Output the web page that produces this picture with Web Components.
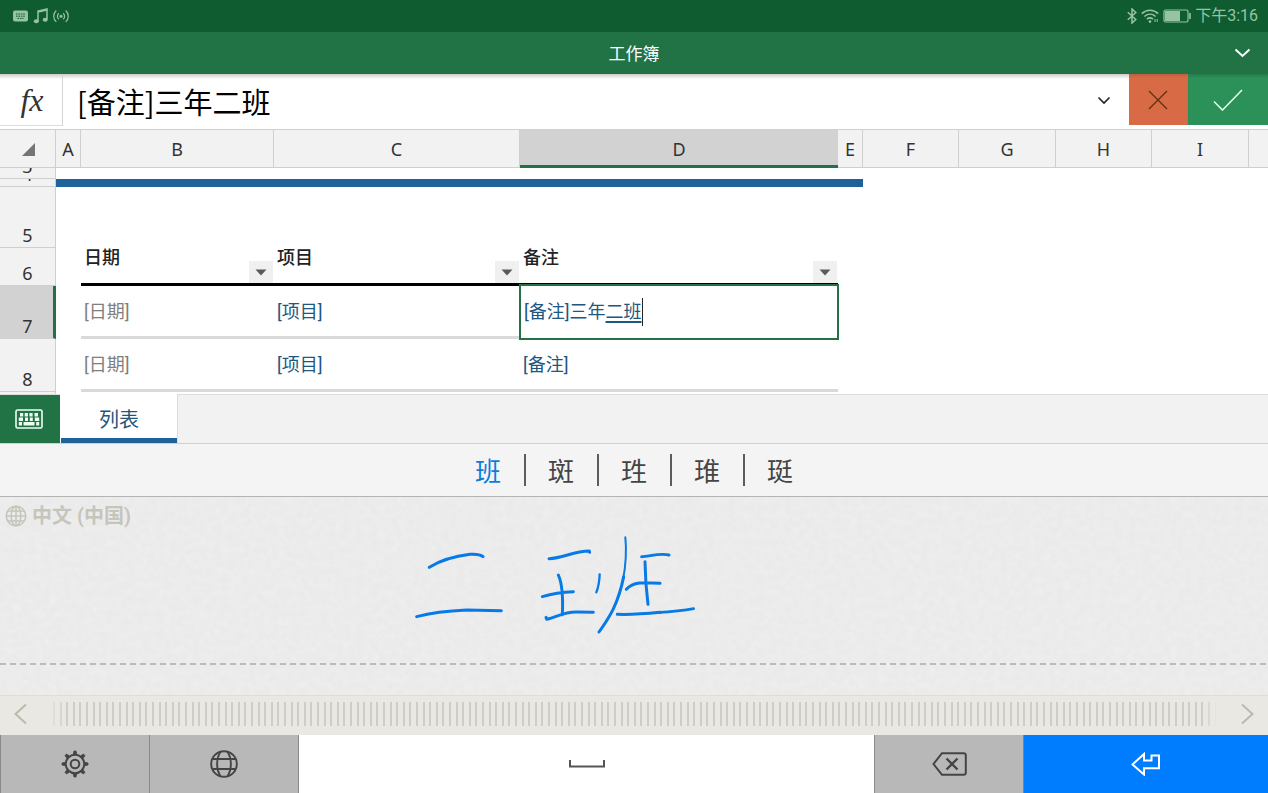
<!DOCTYPE html>
<html lang="zh-CN">
<head>
<meta charset="utf-8">
<title>工作簿</title>
<style>
  html, body { margin: 0; height: 100%; }
  body { background: #fff; font-family: "Noto Sans", "Noto Sans CJK SC", sans-serif; color: #222; }
</style>
</head>
<body>
<workbook-app></workbook-app>
<script>
const define = (name, css, html) => {
  const tpl = document.createElement('template');
  tpl.innerHTML = `<style>*{box-sizing:border-box}:host{display:block;box-sizing:border-box}svg{display:block;flex:none}button{font:inherit;color:inherit;border:0;margin:0;padding:0;background:none}${css}</style>${html}`;
  customElements.define(name, class extends HTMLElement {
    constructor() {
      super();
      this.attachShadow({ mode: 'open' }).append(tpl.content.cloneNode(true));
    }
  });
};

define('status-bar', `
  :host { display: flex; justify-content: space-between; align-items: center; height: 32px; padding: 0 10px 0 13px;
    background: #0f5c30; color: #96c3a4; font: 16px/32px Roboto, "Noto Sans CJK SC", sans-serif; }
  div { display: flex; align-items: center; gap: 5px; }
  .right { gap: 4px; }
`, `
  <div>
    <svg width="15" height="12" viewBox="0 0 15 12"><rect width="15" height="11" y=".5" rx="2" fill="currentColor"/><path d="M3 4h9M3 6.2h9M4.5 8.4h6" stroke="#0f5c30" stroke-width="1" stroke-dasharray="1.6 .8"/></svg>
    <svg width="15" height="16" viewBox="0 0 15 16"><path d="M5 13V3l9-2v10.500M5 4l9-2" fill="none" stroke="currentColor" stroke-width="1.500"/><ellipse cx="3.300" cy="13.200" rx="2.500" ry="2" fill="currentColor"/><ellipse cx="12.200" cy="11.800" rx="2.500" ry="2" fill="currentColor"/></svg>
    <svg width="16" height="14" viewBox="0 0 16 14" fill="none" stroke="currentColor" stroke-width="1.200"><circle cx="8" cy="7.200" r="1.500" fill="currentColor" stroke="none"/><path d="M5.800 4.200a4 4 0 0 0 0 6M10.200 4.200a4 4 0 0 1 0 6M3.300 1.500a7.600 7.600 0 0 0 0 11.400M12.700 1.500a7.600 7.600 0 0 1 0 11.400"/></svg>
  </div>
  <div class="right">
    <svg width="10" height="16" viewBox="0 0 10 16" fill="none" stroke="currentColor" stroke-width="1.500"><path d="M.8 4.200l8 7.300L5 15V1l3.800 3.500-8 7.300"/></svg>
    <svg width="18" height="14" viewBox="0 0 18 14" fill="none" stroke="currentColor" stroke-width="1.600"><path d="M.8 4.600c4.800-4.400 11.600-4.400 16.400 0M3.400 7.500c3.400-3 7.800-3 11.200 0M6 10.200c1.800-1.600 4-1.600 6 0"/><circle cx="9" cy="12.600" r="1.300" fill="currentColor" stroke="none"/><path d="M14 13v-3M16.200 10v3" stroke-width="1"/></svg>
    <svg width="28" height="14" viewBox="0 0 28 14"><rect x="1" y="1" width="24" height="12" rx="1.500" fill="none" stroke="currentColor" stroke-width="1.200"/><rect x="2" y="2" width="15" height="10" fill="currentColor"/><path d="M27 4v6" stroke="currentColor" stroke-width="1.600"/></svg>
    <time>下午3:16</time>
  </div>
`);

define('title-bar', `
  :host { display: grid; grid-template-columns: 1fr auto 1fr; align-items: center; height: 42px; padding: 0 17px; background: #217346; color: #fff; }
  h1 { grid-column: 2; margin: 0; font: 17px/42px "Noto Sans CJK SC", sans-serif; }
  button { justify-self: end; }
`, `
  <h1>工作簿</h1>
  <button aria-label="展开功能区"><svg width="17" height="10" viewBox="0 0 17 10"><path d="M1.500 1.500l7 6.500 7-6.500" fill="none" stroke="#fff" stroke-width="2"/></svg></button>
`);

define('formula-bar', `
  :host { display: flex; align-items: flex-start; height: 56px; background: linear-gradient(#cfcac6, #fff 5px); border-bottom: 1px solid #d0d0d0; }
  .fx { display: flex; align-items: center; justify-content: center; width: 63px; height: 52px; border-right: 1px solid #d4d4d4; border-bottom: 1px solid #ddd; font: italic 32px/52px "Liberation Serif", serif; color: #333; padding-left: 2px; }
  input { flex: 1; min-width: 0; height: 54px; border: 0; outline: 0; padding: 0 0 0 14px; background: none; color: #000; font: 29px/54px "Noto Sans CJK SC", sans-serif; }
  .more { width: 50px; height: 54px; display: grid; place-items: center; }
  .no, .ok { display: grid; place-items: center; height: 51px; }
  .no { width: 59px; background: linear-gradient(#bd5f40, #d96a46 4px); border-right: 1px solid #b5764a; }
  .ok { width: 80px; background: linear-gradient(#257c4b, #2b9158 4px); }
`, `
  <label class="fx" for="f">fx</label>
  <input id="f" value="[备注]三年二班">
  <button class="more" aria-label="展开编辑栏"><svg width="14" height="10" viewBox="0 0 14 10"><path d="M1.500 1.500L7 7l5.500-5.500" fill="none" stroke="#222" stroke-width="1.600"/></svg></button>
  <button class="no" aria-label="取消"><svg width="20" height="20" viewBox="0 0 20 20"><path d="M1 1l18 18M19 1L1 19" stroke="#5c3212" stroke-width="1.300"/></svg></button>
  <button class="ok" aria-label="确定"><svg width="30" height="22" viewBox="0 0 30 22"><path d="M1 12.500l8.500 8.500L29 1" fill="none" stroke="#dcffe8" stroke-width="1.600"/></svg></button>
`);

define('filter-button', `
  :host { flex: none; }
  button { display: grid; place-items: center; width: 24px; height: 22px; background: #f0f0f0; }
`, `<button aria-label="筛选"><svg width="12" height="7" viewBox="0 0 12 7"><path d="M.5.500h11L6 6.500z" fill="#5a5a5a"/></svg></button>`);

define('sheet-grid', `
  :host { overflow: hidden; padding-bottom: 2px; background: linear-gradient(90deg, #f2f2f2 55px, #d0d0d0 55px 56px, #fff 56px); }
  table { width: 100%; table-layout: fixed; border-collapse: separate; border-spacing: 0; background: #fff; }
  th, td { padding: 0; text-align: left; font-weight: 400; }
  thead th { height: 38px; background: #f2f2f2; border-right: 1px solid #cfcfcf; border-bottom: 1px solid #cfcfcf; text-align: center; font-size: 18px; line-height: 30px; color: #333; padding-top: 1px; }
  thead th:last-child { border-right: 0; }
  thead .sel { background: #d2d2d2; border-bottom: 3px solid #217346; border-right: 0; padding-top: 3px; }
  thead svg { margin-left: 22px; }
  tbody th { background: #f2f2f2; border-right: 1px solid #cfcfcf; border-bottom: 1px solid #cfcfcf; font-size: 18px; color: #333; }
  tbody th div { display: flex; flex-direction: column; justify-content: flex-end; align-items: center; height: var(--h); overflow: hidden; line-height: 24px; }
  tbody .sel { background: #d2d2d2; border-right: 3px solid #217346; border-bottom-color: #d2d2d2; }
  tbody .sel div { padding-left: 2px; }
  .r3 { --h: 10px; } .r4 { --h: 7px; } .r5 { --h: 60px; } .r6 { --h: 37px; } .r7, .r8 { --h: 52px; }
  .bar { background: #1f6199; }
  td { font: 18px/24px Roboto, "Noto Sans CJK SC", sans-serif; color: #205781; white-space: nowrap; }
  .head { border-bottom: 3px solid #000; font-weight: 500; color: #222; }
  .head div { display: flex; justify-content: space-between; align-items: flex-end; height: 35px; padding: 0 1px 0 3px; }
  .head span { align-self: flex-start; line-height: 20px; }
  .line { border-bottom: 3px solid #d9d9d9; padding: 1px 0 0 3px; }
  .date { color: #7f7f7f; }
  .edit { position: relative; border-bottom-color: #fff; padding-left: 4px; }
  .edit::after { content: ""; position: absolute; inset: -2px -1px -4px -1px; border: 2px solid #217346; }
  .edit div { display: flex; align-items: center; height: 24px; }
  .caret { width: 1px; height: 28px; margin: -2px 0; background: #222; }
  u { text-underline-offset: 3px; text-decoration-thickness: 2px; }
`, `
  <table>
    <colgroup><col style="width:56px"><col style="width:25px"><col style="width:193px"><col style="width:246px"><col style="width:318px"><col style="width:25px"><col style="width:96px"><col style="width:97px"><col style="width:96px"><col style="width:97px"><col></colgroup>
    <thead><tr><th><svg width="13" height="13" viewBox="0 0 13 13"><path d="M13 0v13H0z" fill="#757575"/></svg></th><th>A</th><th>B</th><th>C</th><th class="sel">D</th><th>E</th><th>F</th><th>G</th><th>H</th><th>I</th><th></th></tr></thead>
    <tbody>
      <tr class="r3"><th><div>3</div></th><td colspan="10"></td></tr>
      <tr class="r4"><th><div>4</div></th><td class="bar" colspan="5"></td><td colspan="5"></td></tr>
      <tr class="r5"><th><div>5</div></th><td colspan="10"></td></tr>
      <tr class="r6"><th><div>6</div></th><td></td><td class="head"><div><span>日期</span><filter-button></filter-button></div></td><td class="head"><div><span>项目</span><filter-button></filter-button></div></td><td class="head"><div><span>备注</span><filter-button></filter-button></div></td><td colspan="6"></td></tr>
      <tr class="r7"><th class="sel"><div>7</div></th><td></td><td class="line date">[日期]</td><td class="line">[项目]</td><td class="line edit"><div><span>[备注]三年<u>二班</u></span><span class="caret"></span></div></td><td colspan="6"></td></tr>
      <tr class="r8"><th><div>8</div></th><td></td><td class="line date">[日期]</td><td class="line">[项目]</td><td class="line">[备注]</td><td colspan="6"></td></tr>
    </tbody>
  </table>
`);

define('sheet-tabs', `
  :host { display: flex; height: 50px; background: #f2f2f2; border-bottom: 1px solid #d0d0d0; border-top: 1px solid #dcdcdc; }
  .kb { display: grid; place-items: center; width: 60px; background: #217346; padding-right: 2px; }
  .tab { width: 118px; margin-top: -1px; border: solid #fff; border-width: 0 0 0 1px; border-right: 1px solid #dcdcdc; background: linear-gradient(#1f6199, #1f6199) bottom / 100% 5px no-repeat #fff; color: #205781; font: 20px/44px "Noto Sans CJK SC", sans-serif; }
`, `
  <button class="kb" aria-label="键盘"><svg width="28" height="20" viewBox="0 0 28 20" fill="#eafff0"><rect x="1" y="1" width="26" height="18" rx="1.500" fill="none" stroke="#eafff0" stroke-width="1.600"/><path d="M5 4h3.200v3.500H5zM9.700 4h3.200v3.500H9.700zM14.400 4h3.200v3.500h-3.200zM19.500 4h3.500v3.500h-3.500zM3.800 8.500H8v3.500H3.800zM10 8.500h3v3.500h-3zM14.800 8.500h3v3.500h-3zM19.800 8.500h4.400v3.500h-4.400zM3.800 13H7v3.500H3.800zM8.500 13h11v3.500h-11zM21.200 13h3v3.500h-3z"/></svg></button>
  <button class="tab">列表</button>
`);

define('candidate-bar', `
  :host { display: flex; justify-content: center; align-items: center; height: 53px; background: #f4f4f4; border-bottom: 1px solid #b4b4b4; }
  button { width: 71px; color: #444; font: 26px/32px "Noto Sans CJK SC", sans-serif; }
  button.top { color: #0a7de0; }
  i { width: 2px; height: 32px; background: #5c5c5c; }
`, `<button class="top">班</button><i></i><button>斑</button><i></i><button>珄</button><i></i><button>琟</button><i></i><button>珽</button>`);

define('ink-pad', `
  :host { flex: 1; display: flex; flex-direction: column; justify-content: space-between; position: relative; min-height: 160px; padding: 4px 0 30px; background: #eaeaea; overflow: hidden; }
  .paper { position: absolute; inset: 0; width: 100%; height: 100%; }
  .lang { position: relative; display: flex; align-items: center; gap: 5px; padding-left: 5px; color: #c6c5bb; font: 700 20px/30px Roboto, "Noto Sans CJK SC", sans-serif; }
  .dash { position: relative; height: 2px; background: repeating-linear-gradient(90deg, #bbb 0 6px, transparent 6px 10px); }
  .ink { position: absolute; left: 415px; top: 39px; }
`, `
  <svg class="paper"><filter id="n" x="0" y="0" width="100%" height="100%"><feTurbulence type="fractalNoise" baseFrequency=".14" numOctaves="3" seed="8"/><feColorMatrix values="0 0 0 0 1  0 0 0 0 1  0 0 0 0 1  1 0 0 0 -.3"/></filter><rect width="100%" height="100%" filter="url(#n)" opacity=".35"/></svg>
  <div class="lang"><svg width="22" height="22" viewBox="0 0 22 22" fill="none" stroke="currentColor" stroke-width="1.500"><circle cx="11" cy="11" r="9.800"/><ellipse cx="11" cy="11" rx="4.800" ry="9.800"/><path d="M11 1v20M1 11h20M3 6h16M3 16h16"/></svg><span>中文 (中国)</span></div>
  <div class="dash"></div>
  <svg class="ink" width="281" height="98" viewBox="45 288 843 294" fill="none" stroke="#077ae6" stroke-width="9" stroke-linecap="round" stroke-linejoin="round">
    <path d="M88 382C120 362 160 349 210 343Q238 341 249 350M50 530Q110 514 200 510L304 512"/>
    <path d="M447 356C490 354 520 334 568 333L569 337M475 405Q491 440 487 524M427 470Q470 457 520 455M438 532L440 538C470 532 490 515 530 516L580 517"/>
    <path d="M599 403Q598 435 589 457" stroke-width="7"/>
    <path d="M676 292Q682 350 669 420" stroke-width="6"/><path d="M671 410C655 490 630 530 597 576"/>
    <path d="M725 350C745 350 780 338 807 345M735 365Q736 430 744 493M679 448C700 425 730 427 780 430M652 523Q700 525 780 517"/>
    <path d="M770 518Q840 514 881 506" stroke-width="8"/>
  </svg>
`);

define('pan-strip', `
  :host { display: flex; align-items: center; justify-content: space-between; height: 40px; padding: 0 13px 3px; background: #e9e8e3; border-top: 1px solid #dedddA; }
  .ticks { flex: 1; height: 24px; margin: 0 24px 0 25px;
    background: linear-gradient(90deg, #cfcdc8 2px, transparent 2px 7px, #cfcdc8 7px 9px, transparent 9px 13px, #cfcdc8 13px 15px, transparent 15px 20px, #cfcdc8 20px 22px, transparent 22px 26px, #cfcdc8 26px 28px, transparent 28px) 0 0 / 33px 100%;
    -webkit-mask-image: linear-gradient(90deg, rgba(0,0,0,.3), #000 14px calc(100% - 14px), rgba(0,0,0,.1)); mask-image: linear-gradient(90deg, rgba(0,0,0,.3), #000 14px calc(100% - 14px), rgba(0,0,0,.1)); }
`, `
  <button aria-label="向左"><svg width="15" height="22" viewBox="0 0 15 22"><path d="M13 1.500L2.500 11 13 20.500" fill="none" stroke="#bcbaa8" stroke-width="2"/></svg></button>
  <div class="ticks"></div>
  <button aria-label="向右"><svg width="15" height="22" viewBox="0 0 15 22"><path d="M2 1.500L12.500 11 2 20.500" fill="none" stroke="#b8b8b4" stroke-width="2"/></svg></button>
`);

define('key-cap', `
  :host { display: grid; background: #b8b8b8; border-left: 1px solid #8a8a8a; color: #444; }
  :host([kind=space]) { background: #fff; border-left-color: #8a8a8a; }
  :host([kind=enter]) { background: #007dff; border-color: #4d8fd0; color: #fff; }
  button { display: grid; place-items: center; }
`, `<button><slot></slot></button>`);

const teeth = [0, 45, 90, 135, 180, 225, 270, 315].map(a => `<path d="M12.200 4.500L13 1h2l.8 3.500z" transform="rotate(${a} 14 14)" fill="currentColor"/>`).join('');
define('key-row', `
  :host { display: grid; grid-template-columns: 149px 149px 1fr 149px 245px; height: 58px; }
`, `
  <key-cap><svg width="28" height="28" viewBox="0 0 28 28" fill="none" stroke="currentColor" stroke-width="2"><circle cx="14" cy="14" r="9.300"/><circle cx="14" cy="14" r="4.300"/><g stroke-width=".8">${teeth}</g></svg></key-cap>
  <key-cap><svg width="28" height="28" viewBox="0 0 28 28" fill="none" stroke="currentColor" stroke-width="1.900"><circle cx="14" cy="14" r="12.800"/><path d="M10.500 1.800c-4.500 7-4.500 17.400 0 24.400M17.500 1.800c4.500 7 4.500 17.400 0 24.400M2.500 9h23M2.500 19h23"/></svg></key-cap>
  <key-cap kind="space"><svg width="36" height="10" viewBox="0 0 36 10"><path d="M1 1v6.500h34V1" fill="none" stroke="#555" stroke-width="2"/></svg></key-cap>
  <key-cap><svg width="35" height="24" viewBox="0 0 35 24" fill="none" stroke="currentColor" stroke-width="2"><path d="M10 1.200h21.500a2.300 2.300 0 0 1 2.300 2.300v17a2.300 2.300 0 0 1-2.300 2.300H10L1.500 12z"/><path d="M14.500 6.500l11 11M25.500 6.500l-11 11" stroke-width="2.400"/></svg></key-cap>
  <key-cap kind="enter"><svg width="30" height="24" viewBox="0 0 30 24" fill="none" stroke="currentColor" stroke-width="2"><path d="M1.500 12.500L13 2v6.500h7.500V3.500H28v12.700H13V22.500z"/></svg></key-cap>
`);

define('workbook-app', `
  :host { display: flex; flex-direction: column; height: 100vh; }
`, `
  <status-bar></status-bar>
  <title-bar></title-bar>
  <formula-bar></formula-bar>
  <sheet-grid></sheet-grid>
  <sheet-tabs></sheet-tabs>
  <candidate-bar></candidate-bar>
  <ink-pad></ink-pad>
  <pan-strip></pan-strip>
  <key-row></key-row>
`);
</script>
</body>
</html>
